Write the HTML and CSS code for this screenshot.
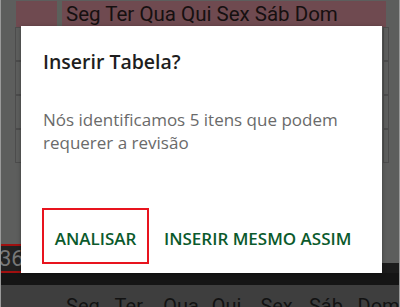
FILE: index.html
```html
<!DOCTYPE html>
<html lang="pt">
<head>
<meta charset="utf-8">
<link rel="stylesheet" href="styles.css">
</head>
<body>
<div class="screen">
  <div class="topbar">
    <div class="tb-cell"></div>
    <div class="tb-divider"></div>
    <div class="tb-days">Seg Ter Qua Qui Sex Sáb Dom</div>
  </div>
  <div class="middle">
    <div class="grid-left">
      <div class="cell"></div><div class="cell"></div><div class="cell"></div><div class="cell"></div>
    </div>
    <div class="grid-right">
      <div class="cell"></div><div class="cell"></div><div class="cell"></div><div class="cell"></div>
    </div>
  </div>
  <div class="band">
    <div class="num">36</div>
  </div>
  <div class="black"></div>
  <div class="days-row">
    <span>Seg</span><span>Ter</span><span>Qua</span><span>Qui</span><span>Sex</span><span>Sáb</span><span>Dom</span>
  </div>

  <div class="dialog">
    <h1 class="title">Inserir Tabela?</h1>
    <p class="msg">Nós identificamos 5 itens que podem requerer a revisão</p>
    <div class="actions">
      <button class="btn btn-outlined">ANALISAR</button>
      <button class="btn">INSERIR MESMO ASSIM</button>
    </div>
  </div>
</div>
</body>
</html>
```
FILE: styles.css
```css
* { box-sizing: border-box; }
html, body { margin: 0; padding: 0; }
body { width: 400px; height: 307px; overflow: hidden; background: #5d5d5d; }

.screen {
  position: relative;
  width: 400px;
  height: 307px;
  overflow: hidden;
  background: #5d5e5d;
  display: flex;
  flex-direction: column;
  border-left: 1px solid #9a9a9a;
  border-right: 1px solid #9a9a9a;
}

.topbar {
  height: 26px;
  margin: 1px 13px 0 15px;
  background: #6f4a50;
  display: flex;
  align-items: center;
  flex-shrink: 0;
}
.tb-cell { width: 41px; height: 100%; }
.tb-divider { width: 5px; height: 100%; background: #5b605b; }
.tb-days {
  margin-left: 4px;
  font-family: Roboto, "Liberation Sans", sans-serif;
  font-size: 20.5px;
  color: #161010;
  line-height: 24px;
}

.middle {
  flex: 1;
  display: flex;
  justify-content: space-between;
}
.grid-left, .grid-right {
  display: flex;
  flex-direction: column;
  width: 6px;
}
.grid-left { margin-left: 14px; }
.grid-right { margin-right: 10px; }
.cell {
  height: 34px;
  border: 1px solid #4c4c4c;
  border-right: none;
}
.grid-right .cell { border-right: 1px solid #4c4c4c; border-left: 1px solid #4c4c4c; }

.band {
  height: 29px;
  background: linear-gradient(to bottom, #5d5e5d 0, #5d5e5d 19px, #1c1c1c 19px);
  display: flex;
  align-items: center;
  flex-shrink: 0;
}
.num {
  width: 20px;
  height: 100%;
  background: #222;
  border-top: 2px solid #a01010;
  border-bottom: 2px solid #a01010;
  color: #777;
  font-family: Roboto, "Liberation Sans", sans-serif;
  font-size: 22px;
  line-height: 25px;
  overflow: hidden;
  text-indent: -2px;
}

.black { height: 12px; background: #151515; flex-shrink: 0; }

.days-row {
  height: 22px;
  background: #3e3e3e;
  flex-shrink: 0;
  display: flex;
  padding-left: 65px;
  font-family: Roboto, "Liberation Sans", sans-serif;
  font-size: 20px;
  color: #121212;
  line-height: 24px;
  padding-top: 9px;
  overflow: hidden;
}
.days-row span { width: 48.6px; flex-shrink: 0; }

.dialog {
  position: absolute;
  left: 20px;
  top: 26px;
  width: 361px;
  height: 247px;
  background: #fff;
  box-shadow: 0 1px 4px rgba(0,0,0,0.35);
  padding: 0 0 0 22px;
  font-family: "Open Sans", "Noto Sans", sans-serif;
}
.title {
  margin: 22px 0 0;
  font-size: 19.5px;
  font-weight: 600;
  color: #1e1e1e;
  line-height: 28px;
}
.msg {
  margin: 32px 0 0;
  font-size: 17px;
  color: #6a6a6a;
  line-height: 23px;
  width: 320px;
}
.actions {
  display: flex;
  align-items: stretch;
  margin-top: 54px;
  margin-left: -1px;
  gap: 13px;
  height: 56px;
}
.btn {
  font-family: "Open Sans", "Noto Sans", sans-serif;
  font-size: 17px;
  font-weight: 600;
  color: #0b5a2c;
  background: none;
  border: 2px solid transparent;
  padding: 6px 0 0;
  margin: 0;
  height: 56px;
  line-height: 24px;
}
.btn-outlined {
  border-color: #e8141e;
  width: 107px;
}
```
